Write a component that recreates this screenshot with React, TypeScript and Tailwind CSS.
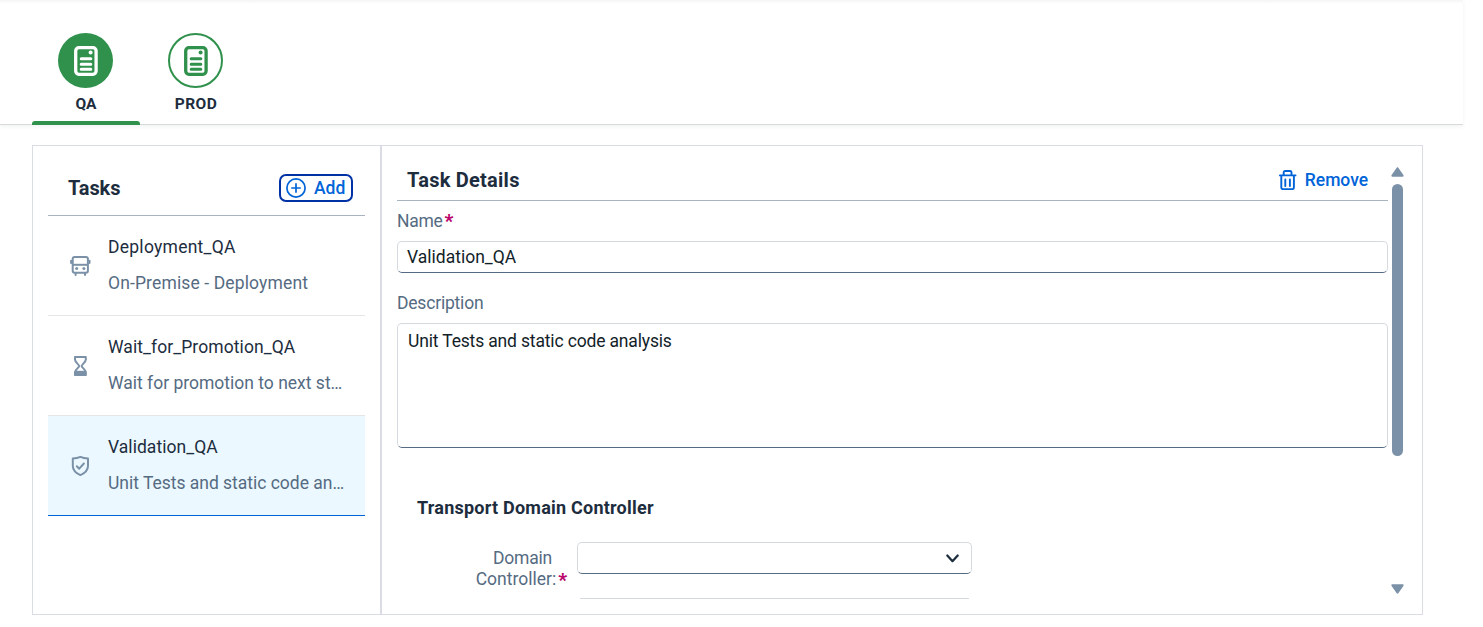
import React from "react";

function DocumentIcon() {
  return (
    <svg width="24" height="30" viewBox="0 0 24 30" fill="none" stroke="currentColor">
      <rect x="1.7" y="1.7" width="20.4" height="26.6" rx="3.2" strokeWidth="3.3" />
      <circle cx="16.6" cy="6.5" r="2" fill="currentColor" stroke="none" />
      <path d="M7.2 12.7h9.600M7.200 18.200h9.600M7.200 23.300h9.600" strokeWidth="3" strokeLinecap="round" />
    </svg>
  );
}

function BusIcon() {
  return (
    <svg width="22" height="22" viewBox="0 0 22 22" fill="none" stroke="currentColor" strokeWidth="2">
      <rect x="3.7" y="1.9" width="15.200" height="15.800" rx="2" />
      <path d="M3.700 9.800h15.200" />
      <path d="M2.100 5.700v2.200M20.500 5.700v2.200" strokeLinecap="round" />
      <path d="M6.600 18v2M16 18v2" strokeLinecap="round" />
      <circle cx="7.700" cy="13.500" r="1.500" fill="currentColor" stroke="none" />
      <circle cx="14.900" cy="13.500" r="1.500" fill="currentColor" stroke="none" />
    </svg>
  );
}

function HourglassIcon() {
  return (
    <svg width="22" height="22" viewBox="-0.4 0 22 22" fill="none" stroke="currentColor" strokeWidth="2">
      <path d="M5.600 1.900h10.800v2.600c0 3-4.200 5-4.200 6.500s4.200 3.500 4.200 6.500v2.600H5.600v-2.600c0-3 4.200-5 4.200-6.500S5.600 7.500 5.600 4.500z" strokeLinejoin="round" />
      <path d="M5 15.800h12v5H5z" fill="currentColor" stroke="none" />
    </svg>
  );
}

function ShieldIcon() {
  return (
    <svg width="22" height="22" viewBox="-0.4 0 22 22" fill="none" stroke="currentColor" strokeWidth="2" strokeLinejoin="round" strokeLinecap="round">
      <path d="M11 1.900c2.300 1 4.700 1.500 7.600 1.700v7.200c0 4.300-3.200 7.400-7.600 9.300-4.400-1.900-7.600-5-7.600-9.300V3.600c2.900-.2 5.300-.7 7.600-1.700z" />
      <path d="M7.400 11.300l2.400 2.400 4.700-5.200" />
    </svg>
  );
}

function AddIcon() {
  return (
    <svg width="20" height="20" viewBox="0 0 20 20" fill="none" stroke="currentColor" strokeWidth="1.700" strokeLinecap="round">
      <circle cx="10" cy="10" r="9.100" />
      <path d="M10 5.900v8.200M5.900 10h8.200" />
    </svg>
  );
}

function TrashIcon() {
  return (
    <svg width="18" height="20" viewBox="0.4 0 18 20" fill="none" stroke="currentColor" strokeWidth="1.900">
      <path d="M1.300 5.400h15.600" strokeLinecap="round" />
      <path d="M5.100 5V2.600c0-1 .6-1.600 1.500-1.600h4.800c.9 0 1.500.6 1.500 1.600V5" />
      <path d="M2.700 5.600v12c0 1 .6 1.500 1.500 1.500h9.600c.9 0 1.500-.5 1.500-1.500v-12" />
      <path d="M6.700 9.500v6.500M11.300 9.500v6.500" strokeLinecap="round" />
    </svg>
  );
}

function RequiredMark() {
  return <span className="ml-0.5 text-[19px] font-black text-[#ba066c]">*</span>;
}

const tasks = [
  {
    name: "Deployment_QA",
    detail: "On-Premise - Deployment",
    icon: <BusIcon />,
    row: "border-[#e5e5e5]",
    nameClass: "tracking-[0.26px]",
    detailClass: "tracking-[0.13px]",
  },
  {
    name: "Wait_for_Promotion_QA",
    detail: "Wait for promotion to next st…",
    icon: <HourglassIcon />,
    row: "border-[#e5e5e5]",
    nameClass: "tracking-[0.08px]",
    detailClass: "tracking-[0px]",
  },
  {
    name: "Validation_QA",
    detail: "Unit Tests and static code an…",
    icon: <ShieldIcon />,
    row: "border-[#0064d9] bg-[#ebf8ff]",
    nameClass: "tracking-[0.04px]",
    detailClass: "tracking-[-0.02px]",
  },
];

export default function App() {
  return (
    <div className="h-[627px] w-[1483px] overflow-hidden bg-white font-[Roboto,sans-serif] text-[17.5px] leading-6 text-[#1d2d3e]">
      <header className="h-[125px] w-[1463px] border-b border-[#d9d9d9] bg-linear-to-b from-[#f5f5f5] to-white to-[4px] pl-8 shadow-[0_2px_4px_rgba(34,53,72,0.06)]">
        <nav className="flex h-full gap-0.5">
          <div className="flex w-[108px] flex-col pt-[33px]">
            <div className="ml-[26px] flex size-[55px] shrink-0 items-center justify-center rounded-full bg-[#30914c] pl-px text-white">
              <DocumentIcon />
            </div>
            <span className="mt-1 text-center text-[15.5px] font-bold">QA</span>
            <div className="mt-[5px] h-1 w-full shrink-0 rounded-t-[3px] bg-[#30914c]" />
          </div>
          <div className="flex w-[108px] flex-col pt-[33px]">
            <div className="ml-[26px] flex size-[55px] shrink-0 items-center justify-center rounded-full border-2 border-[#30914c] pl-px text-[#30914c]">
              <DocumentIcon />
            </div>
            <span className="mt-1 text-center text-[15.5px] font-bold tracking-[0.4px]">PROD</span>
          </div>
        </nav>
      </header>

      <main className="mt-5 ml-8 flex h-[470px] w-[1391px] border border-[#d9dde3]">
        <aside className="w-[349px] shrink-0 border-r-2 border-[#d9dde3] px-[15px]">
          <div className="flex h-[70px] items-center justify-between border-b border-[#a8b3bf] pt-[14px] pr-3 pl-5">
            <h2 className="text-[20px] font-bold tracking-[-0.1px]">Tasks</h2>
            <button className="flex h-7 w-[74px] items-center gap-2 rounded-[7px] border-2 border-[#0032a5] pl-[5px] text-[#0064d9]">
              <AddIcon />
              <span className="font-medium tracking-[0px]">Add</span>
            </button>
          </div>
          <ul>
            {tasks.map((t) => (
              <li key={t.name} className={"flex h-[100px] items-center border-b pl-[21px] " + t.row}>
                <span className="text-[#7b91a8]">{t.icon}</span>
                <div className="ml-[17px] flex flex-col gap-3 pb-px whitespace-nowrap">
                  <span className={t.nameClass}>{t.name}</span>
                  <span className={"text-[#556b82] " + t.detailClass}>{t.detail}</span>
                </div>
              </li>
            ))}
          </ul>
        </aside>

        <section className="ml-[15px] h-[453px] w-[991px] shrink-0 overflow-hidden">
          <div className="flex h-[55px] items-center justify-between border-b border-[#a8b3bf] pt-[14px] pr-5 pl-2.5">
            <h2 className="text-[20px] font-bold tracking-[0.25px]">Task Details</h2>
            <button className="flex items-center gap-2 text-[#0064d9]">
              <TrashIcon />
              <span className="font-medium tracking-[-0.04px]">Remove</span>
            </button>
          </div>
          <label className="mt-2 flex text-[#556b82]">
            <span className="tracking-[-0.3px]">Name</span>
            <RequiredMark />
          </label>
          <div className="mt-2 flex h-8 items-center rounded-[5px] border border-[#d5dae0] border-b-[#556b82] pl-[9px] text-[#131e29]">
            <span className="tracking-[0px]">Validation_QA</span>
          </div>
          <label className="mt-[18px] block text-[#556b82]">
            <span className="tracking-[-0.2px]">Description</span>
          </label>
          <div className="mt-2 h-[125px] rounded-[5px] border border-[#d5dae0] border-b-[#556b82] pt-[5px] pl-2.5 text-[#131e29]">
            <span className="tracking-[-0.16px]">Unit Tests and static code analysis</span>
          </div>
          <h3 className="mt-12 ml-5 text-[18px] font-bold">
            <span className="tracking-[0.23px]">Transport Domain Controller</span>
          </h3>
          <div className="mt-[22px] flex">
            <div className="flex w-[170px] flex-col items-end pt-[6px] leading-[21px] text-[#556b82]">
              <span className="mr-[15px] tracking-[-0.2px]">Domain</span>
              <span className="flex">
                <span className="tracking-[0px]">Controller:</span>
                <RequiredMark />
              </span>
            </div>
            <div className="ml-2.5 w-[395px]">
              <div className="flex h-8 items-center justify-end rounded-[5px] border border-[#d5dae0] border-b-[#556b82] pt-px pr-3 text-[#1d2d3e]">
                <svg width="13" height="9" viewBox="0 0 13 9" fill="none" stroke="currentColor" strokeWidth="2.200" strokeLinecap="round" strokeLinejoin="round">
                  <path d="M1.300 1.500l5.200 5.700 5.200-5.700" />
                </svg>
              </div>
              <div className="mx-[3px] mt-6 h-px bg-[#d5dae0]" />
            </div>
          </div>
        </section>

        <div className="ml-[2px] flex h-[448px] w-[15px] flex-col items-center pt-[21px] text-[#7b91a8]">
          <svg width="15" height="10" viewBox="0 0 15 10" fill="currentColor" className="shrink-0">
            <path d="M6.700.7c.4-.6 1.200-.6 1.600 0l5.100 7.400c.5.900.1 1.600-.8 1.600H2.400c-.9 0-1.300-.7-.8-1.600z" />
          </svg>
          <div className="mt-[7px] h-[272px] w-[11px] shrink-0 rounded-full bg-[#7b91a8]" />
          <svg width="15" height="10" viewBox="0 0 15 10" fill="currentColor" className="mt-auto shrink-0">
            <path d="M6.700 9.300c.4.600 1.200.6 1.600 0l5.100-7.400c.5-.9.1-1.600-.8-1.600H2.400C1.500.3 1.100 1 1.600 1.900z" />
          </svg>
        </div>
      </main>
    </div>
  );
}
